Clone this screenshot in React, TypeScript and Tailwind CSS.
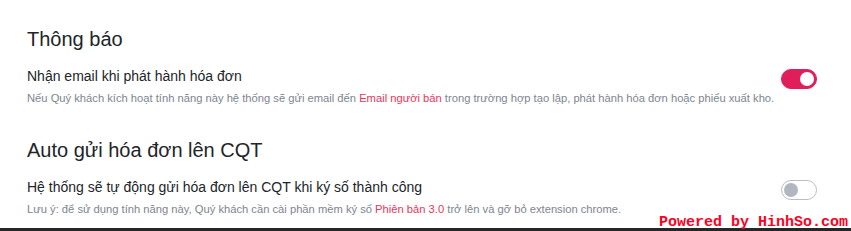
import { useState } from "react";

type Setting = {
  heading: string;
  title: string;
  before: string;
  highlight: string;
  after: string;
  on: boolean;
};

const settings: Setting[] = [
  {
    heading: "Thông báo",
    title: "Nhận email khi phát hành hóa đơn",
    before: "Nếu Quý khách kích hoạt tính năng này hệ thống sẽ gửi email đến ",
    highlight: "Email người bán",
    after: " trong trường hợp tạo lập, phát hành hóa đơn hoặc phiếu xuất kho.",
    on: true,
  },
  {
    heading: "Auto gửi hóa đơn lên CQT",
    title: "Hệ thống sẽ tự động gửi hóa đơn lên CQT khi ký số thành công",
    before: "Lưu ý: để sử dụng tính năng này, Quý khách cần cài phần mềm ký số ",
    highlight: "Phiên bản 3.0",
    after: " trở lên và gỡ bỏ extension chrome.",
    on: false,
  },
];

function Toggle({ on, onClick }: { on: boolean; onClick: () => void }) {
  return (
    <button
      onClick={onClick}
      className={
        on
          ? "mt-[3px] flex h-[20px] w-[36px] shrink-0 items-center justify-end rounded-full border border-[#e01e5a] bg-[#e01e5a] px-[2px]"
          : "mt-[3px] flex h-[20px] w-[36px] shrink-0 items-center justify-start rounded-full border border-[#b8bec5] bg-white px-[2px]"
      }
    >
      <span
        className={
          on
            ? "h-[14px] w-[14px] rounded-full bg-white"
            : "h-[14px] w-[14px] rounded-full bg-[#b1b7be]"
        }
      />
    </button>
  );
}

export default function App() {
  const [state, setState] = useState(settings.map((s) => s.on));

  return (
    <div className="relative h-[231px] w-[851px] overflow-hidden bg-white font-['Liberation_Sans',Arial,sans-serif]">
      <div className="flex flex-col gap-[32px] pl-[27px] pr-[34px] pt-[27px]">
        {settings.map((s, i) => (
          <div key={s.heading} className="flex flex-col">
            <h2 className="text-[20px] leading-[24px] text-[#212529]">{s.heading}</h2>
            <div className="mt-[15px] flex items-start justify-between gap-1">
              <div className="flex min-w-0 flex-col">
                <p className="text-[14px] leading-[21px] text-[#212529]">{s.title}</p>
                <p className="mt-[3px] whitespace-nowrap text-[11.2px] leading-[16px] text-[#7d8590]">
                  {s.before}
                  <span className="text-[#e8365b]">{s.highlight}</span>
                  {s.after}
                </p>
              </div>
              <Toggle
                on={state[i]}
                onClick={() => setState((prev) => prev.map((v, j) => (j === i ? !v : v)))}
              />
            </div>
          </div>
        ))}
      </div>
      <div className="absolute bottom-0 left-0 h-[3px] w-full bg-[#262626]" />
      <span className="absolute bottom-0 right-[3px] font-['Liberation_Mono',monospace] text-[15px] font-bold leading-[17px] text-[#ff0022]">
        Powered by HinhSo.com
      </span>
    </div>
  );
}
